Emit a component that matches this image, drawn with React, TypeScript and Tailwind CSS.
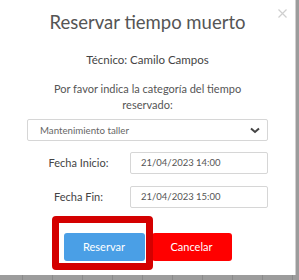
import React from 'react';

const font = { fontFamily: 'Lato, "Noto Sans", sans-serif' };

const DateRow: React.FC<{ label: string; value: string; className?: string }> = ({ label, value, className }) => (
    <div className={`flex items-center ${className ?? ''}`}>
        <div className="w-[103px] text-center text-[11px] text-[#444]">{label}</div>
        <div className="w-[138px] h-[22px] border border-[#d6d6d6] rounded-[2px] flex items-center pl-[10px] text-[9.5px] text-[#555]">
            {value}
        </div>
    </div>
);

export default function App() {
    return (
        <div className="w-[299px] h-[280px] bg-[#9c9c9c] overflow-hidden" style={font}>
            <div className="relative w-[296px] h-[275px] bg-white border-r border-[#d0d0d0] flex flex-col items-center">
                <button className="absolute right-[8px] top-[9px]">
                    <svg width="9" height="9" viewBox="0 0 9 9">
                        <path d="M0.5 0.5 L8.5 8.5 M8.5 0.5 L0.5 8.5" stroke="#cfcfcf" strokeWidth="1.2" />
                    </svg>
                </button>

                <h2 className="mt-[9px] text-[18.5px] leading-[26px] text-[#555]">Reservar tiempo muerto</h2>

                <p className="mt-[17px] text-[11.5px] leading-[16px] text-[#444]">Técnico: Camilo Campos</p>

                <p className="mt-[13px] w-[230px] text-center text-[11px] leading-[16px] text-[#555]">
                    Por favor indica la categoría del tiempo reservado:
                </p>

                <div className="mt-[6px] w-[241px] h-[22px] border border-[#d6d6d6] rounded-[2px] flex items-center justify-between pl-[12px] pr-[7px]">
                    <span className="text-[9.7px] text-[#666]">Mantenimiento taller</span>
                    <svg width="10" height="7" viewBox="0 0 10 7">
                        <path d="M1 1.5 L5 5 L9 1.5" fill="none" stroke="#444" strokeWidth="2" />
                    </svg>
                </div>

                <DateRow label="Fecha Inicio:" value="21/04/2023 14:00" className="mt-[11px]" />
                <DateRow label="Fecha Fin:" value="21/04/2023 15:00" className="mt-[12px]" />

                <div className="relative mt-[25px] flex gap-[7px]">
                    <button className="w-[81px] h-[28px] rounded-[3px] bg-[#4a9fe6] text-white text-[11px]">Reservar</button>
                    <button className="w-[80px] h-[28px] rounded-[3px] bg-[#ff0000] text-white text-[11px]">Cancelar</button>
                    <div className="absolute left-[-12px] top-[-17px] w-[101px] h-[54px] border-[7px] border-[#d40000] rounded-[4px]" />
                </div>
            </div>
            <div className="flex h-[5px]">
                {Array.from({ length: 10 }).map((_, i) => (
                    <div key={i} className="w-[30px] shrink-0 border-r border-[#8a8a8a] first:w-[23px]" />
                ))}
            </div>
        </div>
    );
}
